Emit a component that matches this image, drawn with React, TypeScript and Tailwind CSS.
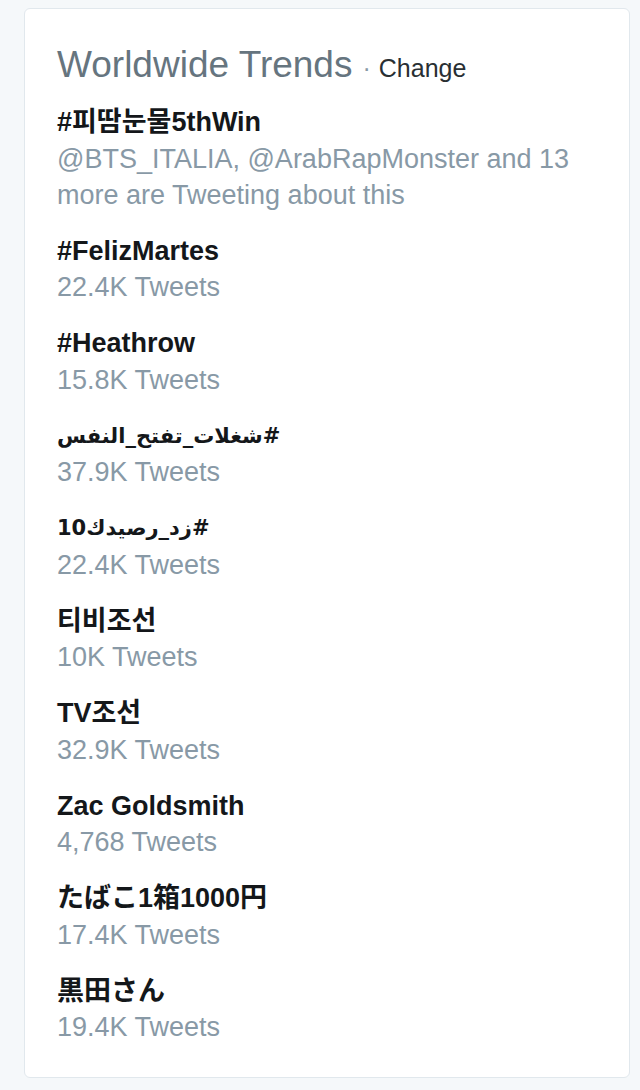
const trends: { name: string; meta: string; lang?: "ko" | "ja" | "ar" }[] = [
  { name: "#피땀눈물5thWin", meta: "@BTS_ITALIA, @ArabRapMonster and 13 more are Tweeting about this", lang: "ko" },
  { name: "#FelizMartes", meta: "22.4K Tweets" },
  { name: "#Heathrow", meta: "15.8K Tweets" },
  { name: "#شغلات_تفتح_النفس", meta: "37.9K Tweets", lang: "ar" },
  { name: "#زد_رصيدك10", meta: "22.4K Tweets", lang: "ar" },
  { name: "티비조선", meta: "10K Tweets", lang: "ko" },
  { name: "TV조선", meta: "32.9K Tweets", lang: "ko" },
  { name: "Zac Goldsmith", meta: "4,768 Tweets" },
  { name: "たばこ1箱1000円", meta: "17.4K Tweets", lang: "ja" },
  { name: "黒田さん", meta: "19.4K Tweets", lang: "ja" },
];

const fontFor = (lang?: string) => {
  if (lang === "ko") return "font-['Liberation_Sans','Noto_Sans_CJK_KR',sans-serif]";
  if (lang === "ja") return "font-['Liberation_Sans','Noto_Sans_CJK_JP',sans-serif]";
  if (lang === "ar") return "font-['DejaVu_Sans','Liberation_Sans',sans-serif] text-[21px]";
  return "font-['Liberation_Sans',sans-serif]";
};

export default function App() {
  return (
    <div className="min-h-[1090px] bg-[#f5f8fa] pt-[8px] pb-[14px] pl-[24px] pr-[10px] font-['Liberation_Sans',sans-serif]">
      <div className="rounded-[6px] border border-[#e1e8ed] bg-white pl-[32px] pr-[28px] pt-[34px] pb-[32px]">
        {/* Header */}
        <div className="flex items-baseline leading-[44px]">
          <h3 className="text-[37px] text-[#66757f]">Worldwide Trends</h3>
          <span className="ml-[10px] text-[25px] text-[#8899a6]">·</span>
          <a href="#" className="ml-[8px] text-[25px] text-[#292f33]">
            Change
          </a>
        </div>

        {/* Trends */}
        <ul className="mt-[14px] flex flex-col gap-[20px]">
          {trends.map((t) => (
            <li key={t.name} className="text-[27px] leading-[36.5px]">
              <div
                dir={t.lang === "ar" ? "rtl" : undefined}
                className={`font-bold text-[#14171a] text-left ${fontFor(t.lang)}`}
              >
                {t.name}
              </div>
              <div className="text-[#8899a6] leading-[36px]">{t.meta}</div>
            </li>
          ))}
        </ul>
      </div>
    </div>
  );
}
